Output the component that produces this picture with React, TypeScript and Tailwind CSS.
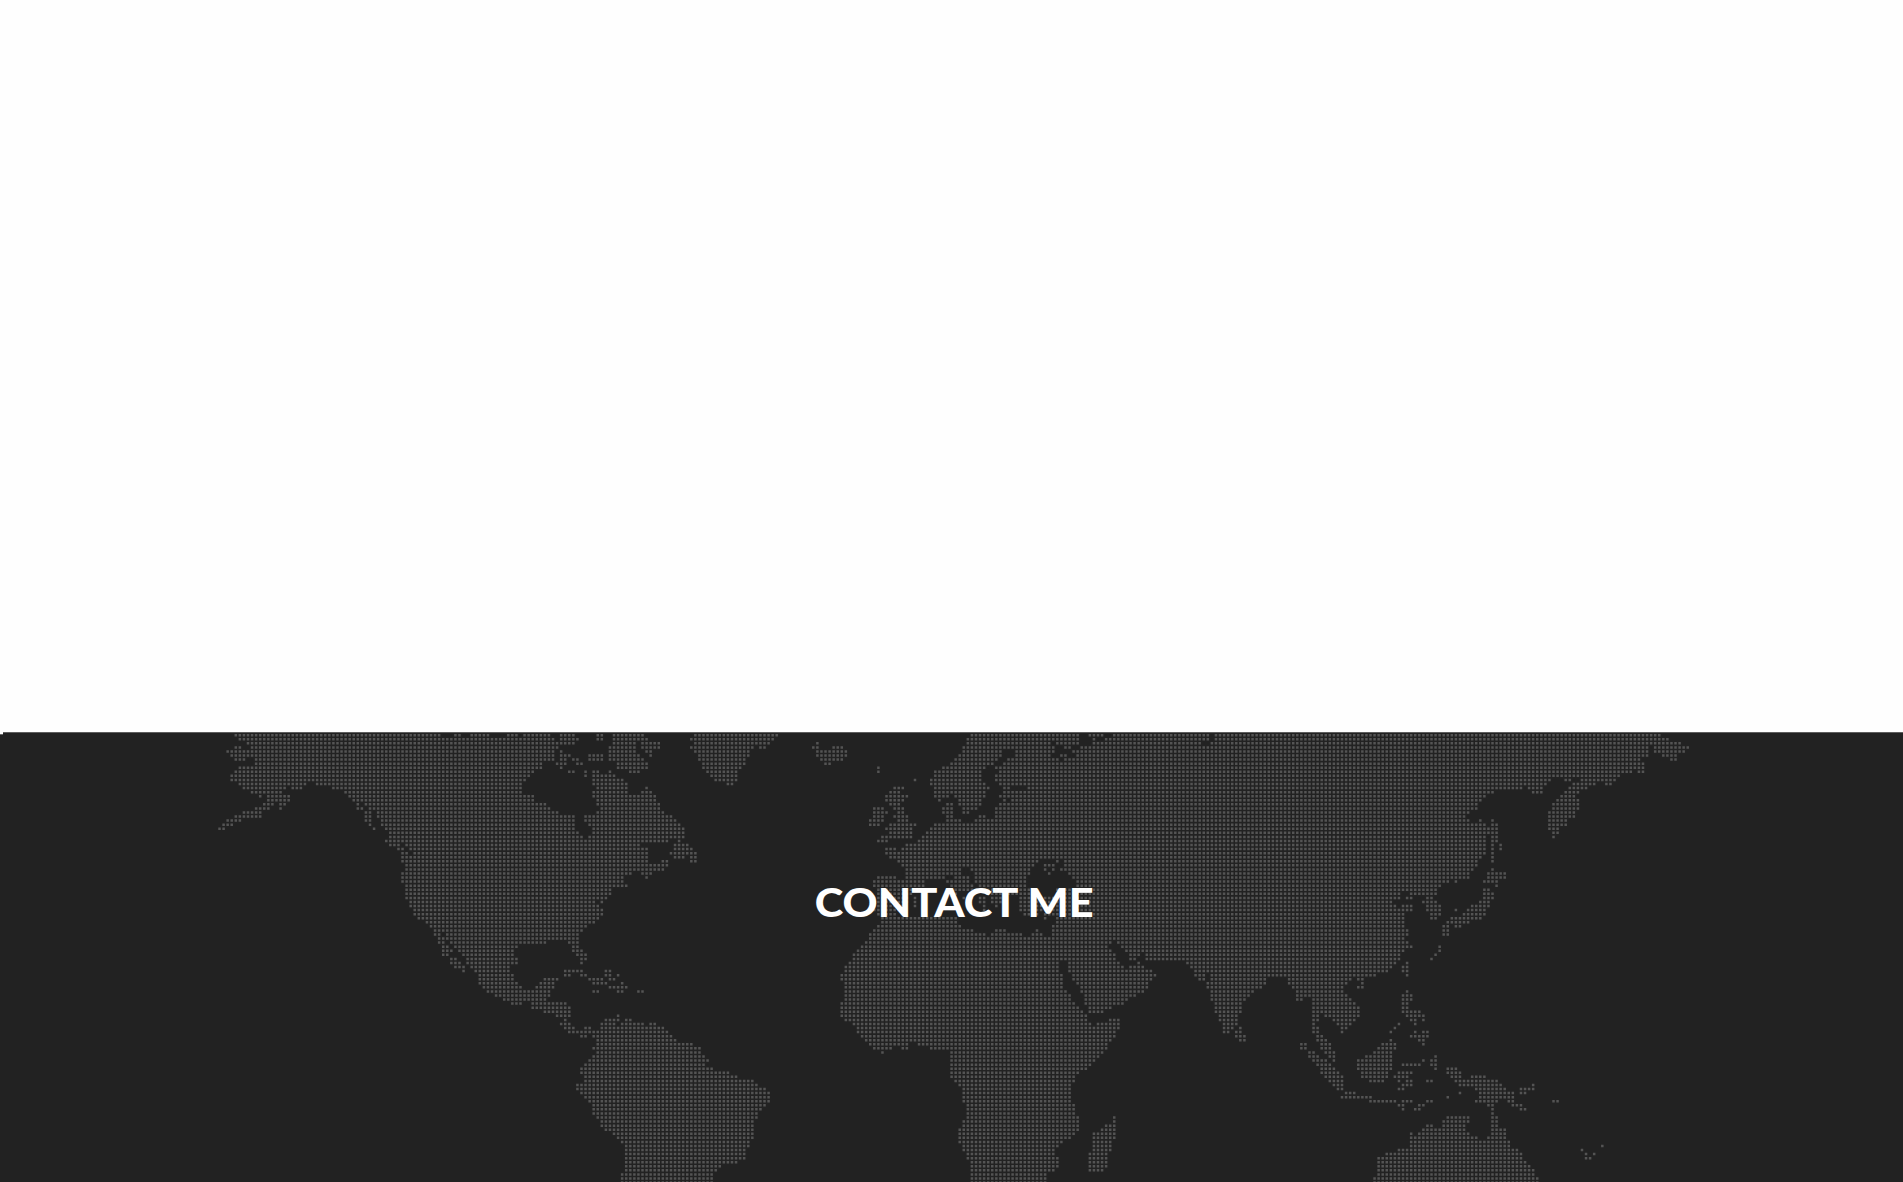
const PITCH = 4.067;
const FIRST_COL_X = 223.6;
const FIRST_ROW_Y = 735.2;
const SECTION_X = 3;
const SECTION_Y = 732;
const UNITS_PER_PX = 3;

type Tile = { x: number; row: number; rows: string };

/* Land spans of each map tile. Rows are separated by "|", spans by ",". */
const TILES: Tile[] = [
  {
    x: 210,
    row: -1,
    rows: "66-900|78-690,737-749,785-834,895-900|90-900|114-900|78-90,127-900|53-900|66-900|78-102,139-900|139-900|90-900|78-900|66-900|66-900|90-285,322-900|102-224,249-273,371-900|127-212,407-900|151,175-236,419-900|175-236,432-900|163-188,212-224,444,468-900|139-175,212,444-456,480-900|102-151,468-480,505-900|78-151,468-480,505-900|53-90,468-480,517-900|41-66,480,517-900|32-41,493,529-900|541-900|541-900|529-900|541-566,590-900|566-578,602-900|578-590,615-900|578-900|578-900|590-900|590-900|578-900|578-900|578-900|590-900|590-900|590-900|590-900|602-900|602-900|615-900|615-900|627-900|651-900|663-900|676-900|676-688,712-900|688-712,724-900|688-700,724-900",
  },
  {
    x: 500,
    row: -1,
    rows: "0-430,575-855|25-50,74-147,184-221,294-306,343-428,587-831|0-160,184-233,294-306,343-440,575-818|0-172,184-221,343-404,428-477,587-806|0-172,331-404,428-477,575-757,782-794|0-160,184,331-404,440-453,587-745|0-160,184-208,269-306,331-416,453,599-745|0-160,184-196,221-233,269-306,331-428,599-733|0-123,172-196,233-245,355-440,611-733|0-123,184,355-440,611-721|0-98,208-221,257,282-294,331,392-416,623-709|0-86,257,282-343,636-709|0-74,282-367,648-709|0-62,282-379,684-697|0-62,294-379,440|0-62,282-379,428-453|0-98,282-465|0-98,294-465|0-135,294-477|0-147,306-477|0-172,294-489|0-221,257-514|0-221,257-526|0-221,269-538|0-221,282-550|0-233,282-550|0-245,269-550|0-501,538|0-416,526-562|0-440,526-575|0-440,514-587|0-440,526-550,575-587|0-440,489-501,575-587|0-501|0-489|0-392,428-453|0-367,440|0-367|0-379|0-331|0-331|0-318|0-282,306|0-294|0-306|0-306|0-294|0-282|0-257|0-245|0-233|0-233|0-135,208-233",
  },
  {
    x: 790,
    row: -1,
    rows: "0-21,570-960|546-863,900-936|533-863,912,950-960|82,533-778,802-863,912-960|70-82,131-156,521-790,826-838,875-960|82-168,521-630,680-790,851-960|82-168,509-630,680-778,814-826,863-960|95-156,497-620,655-802,826-960|107-119,484-606,643-960|265,460-582,619-960|265,436-570,630-960|436-570,619-960|375,424-570,619-960|424-582,630-960|314-338,436-594,643-660,716-960|302-326,436-582,643-960|290-350,436-472,497-582,630-960|290-338,448,509-570,643,667-960|302-326,472-484,509-570,630-960|253-277,314-338,460-484,521-558,619-960|253-290,326-338,460-484,521-533,619-960|253-277,314-350,472-484,570-582,619-960|241-277,326-350,472-509,558-960|241-265,302-375,436-960|290-363,424-960|302-363,411-960|277-290,302-363,399-960|265-290,387-960|350-960|290-314,338-960|290-960|302-960|326-745,802,826-960|338-733,770-790,826-960|350-509,545-720,765,790,814-960|350-509,558-720,778,838-960|265-314,350-460,497-533,558-708,851-960|253-399,472-533,558-708,863-960|253-399,484-545,570-708,863-960|265-375,497-560,594-716,800-836,875-960|265-363,497,594-716,800-960|253-351,375,521-545,570-582,606-630,692-960|253-351,375,533,570-582,606-630,692-960|253-338,375,582,619,692-960|253-338,582,692-960|265-314,509,704-740,765-960|277-497,765,802-960|277-497,802-960|265-509,790-960|253-545,619-643,740,790-960|241-582,606-692,728-757,790-960|241-960|229-960",
  },
  {
    x: 1100,
    row: -1,
    rows: "0-900|7,43-325,350-900|19-325,350-900|0-300,338-900|0-870|0-870|0-870|0-870|0-870|0-870|0-870|0-870|0-870|0-870|0-870|0-870|0-870|0-870|0-870|0-870|0-870|0-870|0-870|0-870|0-870|0-870|0-870|0-870|0-870|0-870|0-870|0-870|0-870|0-870|0-870|0-870|0-870|0-870|0-870|0-870|0-870|0-870|0-870|0-870|0-870|0-870|0-870|0-870|0-870|0-870|0-870|0-870|0-19,55-870",
  },
  {
    x: 1390,
    row: -1,
    rows: "0-800|0-812|0-836|0-873|0-775,797-897|0-775,797-883|0-775,822-860|0-750,847-860|0-763|0-763|0-726,750-763|0-690|0-483,531-543,580-678|0-470,555-616,653-665|0-397,421-458,543-592|0-312,433-458,531-567|0-287,519-555|0-275,507-567|0-263,495-567|0-263,495-567|0-239,482-555|0-226,482-555|0-239,275,312,482-531|0-287,312-324,482-531|0-324,482-507|0-324,495-507|0-287,312-324,495|0-287,312-324|0-287,312,336|0-287,312,336|0-287,312|0-275,312|0-263,312|0-263|0-251,312|0-239,299-348|0-239,299-348|0-178,202,287-324|0-153,324|0-141,287-299|0-28,64-141,287-312|0-28,52-64,116-128,287-312|0-5,104-141,275-299|0-16,40-64,116-153,251-299|0-64,116-153,202,239-287|0-40,128-153,226-287|0-40,128-141,190-275|0-40,178-239|0-40,165-178,202-214|0-52,165-178|0-52,165-178|0-40|0-52|0-52,153|0-40,153",
  },
  {
    x: 400,
    row: 52,
    rows: "130-142,167-350,521-533|130-155,179-338,521-545|130-142,191-338,533-557|155-167,203-350,545-557|155-179,203-350,545|167-191,216-326|191,228-326,497-545,618-630|240-338,497-509,545-557,618-630,655|240-338,436-472,570-606,630-643|240-350,423-460,582-618,667|252-363,411-460,630-679|265-448,582-594,655-667,716-728|289-448|313-436|338-363,399-497|399-509|436-509|472-509,655|497,618-655,679-691|484-509,606-643,667-728,752-765|497-521,557-570,606-789|509-801|545-557,582-813|594-825|594-874|582-898|594-898|582-911|570-923|557-911|545-935|545-984|557-1008|557-1057|533-1069|533-1094|545-1106|557-1106|570-1106|582-1094|582-1082|582-1069|594-1069|606-1057|606-1057|618-1057|643-1057|655-1057|667-1045|679-1045|679-1033|679-1033|679-1033|679-1008|679-960|679-947|667-935|667-935|667-935",
  },
  {
    x: 790,
    row: 52,
    rows: "218-950,996-1050|206-962,1008-1050|194-974,1021-1050|194-974,1021-1033|182-802,838-986,1045|170-802,838-998,1021-1050|168-802,838-1050|156-814,850-1050|156-814,850-1050|168-814,863-1050|168-814,875-1050|168-826,875-1050|168-838,887-1033|168-838,887-1008|156-850,887-998|156-863,899-962|156-875,899-938|156-887|168-887,960-986|194-899,923-986|206-986|206-974|218-974|230-962|242-350,387-950|255-302,338-350,423-950|279,484-938|484-925|484-913|484-901|484-889|484-865|484-852|497-852|509-840|521-840|521-840|521-840|521-840|533-852|533-852|533-852|533-865,974|521-865,974|521-865,950-974|509-865,938-974|509-852,913-974|509-840,913-974|509-816,913-962|521-804,913-962|521-792,913-962|533-792,899-950|533-804,899-950|545-804,899-950|545-804,899-950|545-792,899-938|545-767|545-767|545-767",
  },
  {
    x: 1130,
    row: 52,
    rows: "0-840|0-820|0-30,50-808|0-16,50-808|28,173-796|0-40,185-784|0-65,197-772|0-77,197-225,246-735|0-65,209-221,246-405,478-650,687-699|0-53,234-405,478-650,699|0-53,234-392,490-638,687-699|0-40,246-368,502-638|0-16,246-356,502-650|246-343,502-514,551-660|258-332,551-675|258-332,551-687|258-332,551-687|270-319,551-565,587-687|270-319,551-565,612-675|283-319,551,624-660|283-307,332,551-565,636-648|283-295,319-332,551-565,636|319-343,563-575|332-343,563-587|514-526,575-600|514-526,575-600|538-551,587-612|538-563,600-612|551-587,612|563-600|575-612|575-624|587-636|600-636|612-636|624-636|648-672|636-721",
  },
  {
    x: 1350,
    row: 52,
    rows: "0-173,270|0-161,270|0-149,258|0-149,246|0-136,173|0-124,161-173|0-112,161-173|0-75,173|0,27-39|39|27-39|173|161-185|161-185|161-173|161-173|161-209|173-221|185-197,221|149,197|136|124,197,221-234|185-234|124,209-221|100-136,221|88-136|75-124|51-124,258|27-124,221,246-258|27-124,161-209,246-258|27-124,258,294-319|39-112,149-185,294-331|39-112,136-173,307-331,368-404|63-100,149,173-185,234-246,319-441|161-185,331-453,551|149-161,380-465,514-551|0-15,331,392-490,514-526|0-63,294,392-490|63-136,161-185,234-246,380-441,478-490,612-624|149-161,209-221,417-429,490-514|161,197-209,429,514-526|429|294-356,429-441|282-356,429-441|234-246,282-343,429-441|221-343,429-465|185,209-356,429-465|185-380,417-465|185-478|185-478,758|149-502,697|112-514,709,734|88-514,709-721|88-526|88-538|88-551|88-551|75-563|75-563",
  },
];

function buildDots(): string {
  const seen = new Set<string>();
  const parts: string[] = [];
  const size = 2.5;
  for (const tile of TILES) {
    const toCol = (u: number) => Math.round((tile.x + u / UNITS_PER_PX - FIRST_COL_X) / PITCH);
    tile.rows.split("|").forEach((spans, i) => {
      const row = tile.row + i;
      for (const span of spans.split(",")) {
        const [a, b = a] = span.split("-").map(Number);
        for (let col = toCol(a); col <= toCol(b); col++) {
          const key = `${col}:${row}`;
          if (seen.has(key)) continue;
          seen.add(key);
          const x = FIRST_COL_X + col * PITCH - SECTION_X - size / 2;
          const y = FIRST_ROW_Y + row * PITCH - SECTION_Y - size / 2;
          parts.push(`M${x.toFixed(2)} ${y.toFixed(2)}h${size}v${size}h-${size}z`);
        }
      }
    });
  }
  return parts.join("");
}

const DOTS = buildDots();

function WorldMap() {
  return (
    <svg
      className="pointer-events-none absolute inset-0 h-[450px] w-[1903px]"
      viewBox="0 0 1903 450"
      aria-hidden="true"
    >
      <path d={DOTS} fill="#545454" />
    </svg>
  );
}

export default function App() {
  return (
    <div className="h-[1182px] w-full overflow-hidden bg-[#fefefe]">
      <div className="h-[732px]" />
      <div className="flex h-[450px]">
        <div className="mt-0.5 w-[3px] shrink-0 border-t border-[#666] bg-[#222]" />
        <section className="relative flex h-[450px] w-[1903px] shrink-0 justify-center bg-[#222]">
          <WorldMap />
          <div className="absolute inset-x-0 top-0 h-px bg-[#5e5e5e]" />
          <h2 className="relative mt-[140px] origin-center scale-x-[1.097] font-['Lato',sans-serif] text-[39.5px] leading-[60px] font-black whitespace-nowrap text-white">
            CONTACT ME
          </h2>
        </section>
      </div>
    </div>
  );
}
